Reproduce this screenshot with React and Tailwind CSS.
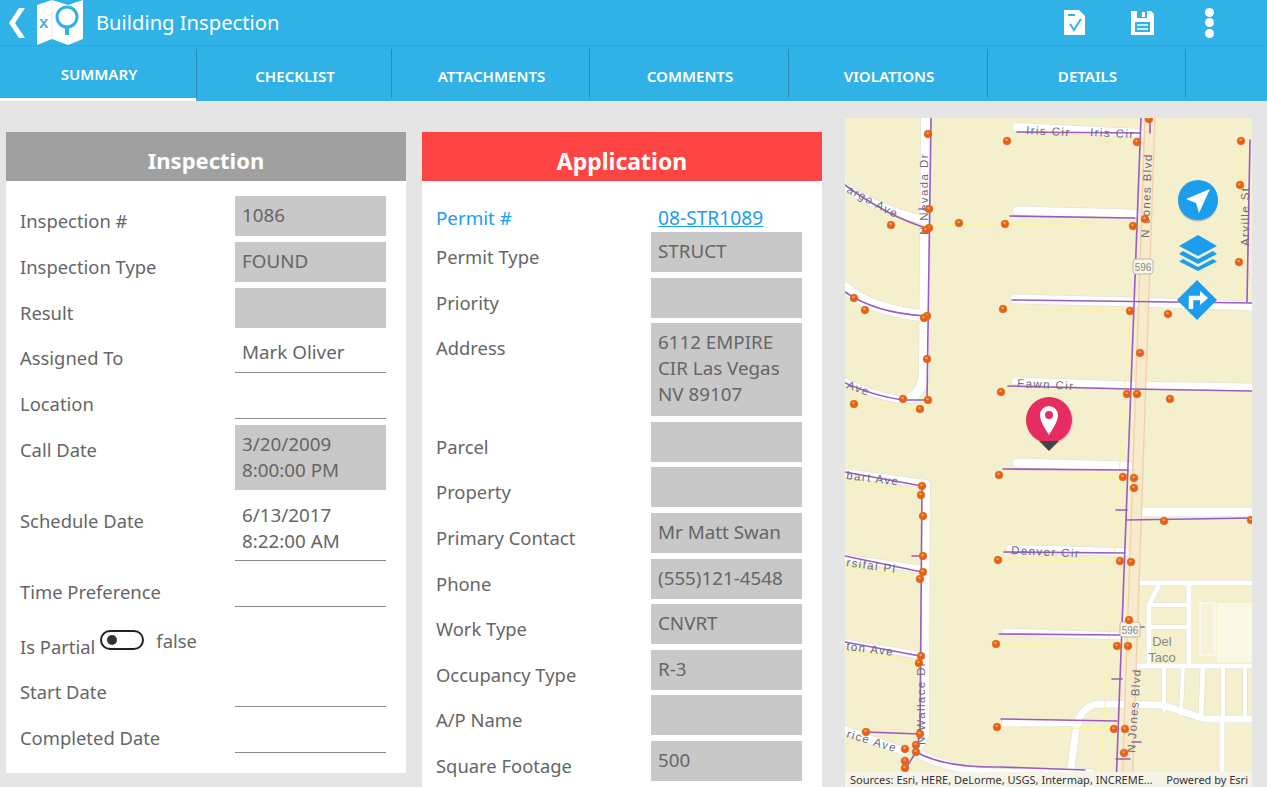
const inspection = [
  { label: "Inspection #", value: "1086", kind: "box" },
  { label: "Inspection Type", value: "FOUND", kind: "box" },
  { label: "Result", value: "", kind: "box" },
  { label: "Assigned To", value: "Mark Oliver", kind: "line" },
  { label: "Location", value: "", kind: "line" },
  { label: "Call Date", value: ["3/20/2009", "8:00:00 PM"], kind: "box" },
  { label: "Schedule Date", value: ["6/13/2017", "8:22:00 AM"], kind: "line" },
  { label: "Time Preference", value: "", kind: "line" },
  { kind: "toggle" },
  { label: "Start Date", value: "", kind: "line" },
  { label: "Completed Date", value: "", kind: "line" },
];
const application = [
  { label: "Permit Type", value: "STRUCT" },
  { label: "Priority", value: "" },
  { label: "Address", value: ["6112 EMPIRE", "CIR Las Vegas", "NV 89107"] },
  { label: "Parcel", value: "" },
  { label: "Property", value: "" },
  { label: "Primary Contact", value: "Mr Matt Swan" },
  { label: "Phone", value: "(555)121-4548" },
  { label: "Work Type", value: "CNVRT" },
  { label: "Occupancy Type", value: "R-3" },
  { label: "A/P Name", value: "" },
  { label: "Square Footage", value: "500" },
];
const tabs = [
  ["SUMMARY", "w-[197px]"],
  ["CHECKLIST", "w-[195px]"],
  ["ATTACHMENTS", "w-[198px]"],
  ["COMMENTS", "w-[199px]"],
  ["VIOLATIONS", "w-[199px]"],
  ["DETAILS", "w-[198px]"],
];

function Lines({ value }) {
  const lines = Array.isArray(value) ? value : [value];
  return lines.map((l, i) => (
    <div key={i} className="leading-[26px]">{l}</div>
  ));
}

function InspectionRow({ row }) {
  if (row.kind === "toggle") {
    return (
      <div className="flex h-[49px] items-start pl-[14px] text-[18.4px]">
        <span className="mt-[22px] leading-[26px]">Is Partial</span>
        <span className="relative ml-[5px] mt-[18px] h-[20px] w-[44px] rounded-full border-2 border-[#222]">
          <span className="absolute left-[5px] top-[3px] h-[10px] w-[10px] rounded-full bg-[#333]" />
        </span>
        <span className="ml-[12px] mt-[16px] leading-[26px]">false</span>
      </div>
    );
  }
  const multi = Array.isArray(row.value);
  return (
    <div className="flex items-start pl-[14px]">
      <div className="w-[215px] pt-[12px] text-[18.4px] leading-[26px]">{row.label}</div>
      <div
        className={`w-[151px] px-[7px] pt-[6px] text-[18.8px] ${multi ? "h-[65px]" : "h-[40px]"} ${
          row.kind === "box" ? "bg-[#c8c8c8]" : "border-b border-[#8a8a8a]"
        }`}
      >
        <Lines value={row.value} />
      </div>
    </div>
  );
}

function ApplicationRow({ row }) {
  const lines = Array.isArray(row.value) ? row.value.length : 1;
  return (
    <div className="flex items-start pl-[14px]">
      <div className="w-[215px] pt-[12px] text-[18.4px] leading-[26px]">{row.label}</div>
      <div
        className={`w-[151px] bg-[#c8c8c8] px-[7px] pt-[6px] text-[18.8px] ${lines === 3 ? "h-[93px]" : "h-[40px]"}`}
      >
        <Lines value={row.value} />
      </div>
    </div>
  );
}

function Logo() {
  return (
    <svg width="46" height="46" viewBox="0 0 46 46" className="ml-[12px] shrink-0">
      <path d="M0 5 L15 0 L31 5 L46 0 V39 L31 45 L15 39 L0 45 Z" fill="#fff" />
      <path d="M15 0 V39 M31 5 V45" stroke="#d6eef8" strokeWidth="1" />
      <text x="2" y="28" fontSize="17" fontWeight="700" fill="#5aa9cf" fontFamily="Liberation Sans, sans-serif">x</text>
      <circle cx="30" cy="17" r="10" fill="#fff" stroke="#31b2e7" strokeWidth="3" />
      <path d="M30 27 V35" stroke="#31b2e7" strokeWidth="4" />
    </svg>
  );
}

function HeaderIcons() {
  return (
    <div className="ml-auto flex items-center">
      <svg width="21" height="26" viewBox="0 0 21 26" className="mr-[46px]">
        <path d="M0 0 H15 L21 6 V25 H0 Z" fill="#fff" />
        <path d="M4 5 H11" stroke="#31b2e7" strokeWidth="2" />
        <path d="M6 14 L10 20 L17 9" fill="none" stroke="#31b2e7" strokeWidth="2" />
      </svg>
      <svg width="23" height="26" viewBox="0 0 23 26" className="mr-[51px]">
        <path d="M0 1 H20 L23 4 V25 H0 Z" fill="#fff" />
        <rect x="6" y="1" width="10" height="7" fill="#31b2e7" />
        <rect x="11" y="2" width="3" height="5" fill="#fff" />
        <rect x="4" y="12" width="15" height="10" fill="#31b2e7" />
        <path d="M6 15 H17 M6 19 H17" stroke="#fff" strokeWidth="1.6" />
      </svg>
      <div className="mr-[53px] flex flex-col gap-[1.5px]">
        <span className="h-[9px] w-[9px] rounded-full bg-white" />
        <span className="h-[9px] w-[9px] rounded-full bg-white" />
        <span className="h-[9px] w-[9px] rounded-full bg-white" />
      </div>
    </div>
  );
}

const whiteRoads = [
  ["M926 118 L924 372 Q923 392 910 398", 10],
  ["M1017 127 L1140 133", 8],
  ["M1017 211 L1135 214", 9],
  ["M1015 299 L1135 302 L1252 306", 9],
  ["M1015 381 L1130 385 L1252 387", 7],
  ["M1017 463 L1128 466", 9],
  ["M1136 512 L1252 512", 9],
  ["M1010 549 L1125 552", 8],
  ["M1006 632 L1122 636", 7],
  ["M845 187 Q880 210 924 220", 8],
  ["M845 288 Q870 310 925 316", 11],
  ["M845 382 Q880 398 905 400 Q920 400 925 372", 7],
  ["M845 473 L926 484 L925 735 L916 752 Q945 770 1000 773 L1090 773", 8],
  ["M845 558 L920 569", 7],
  ["M845 643 L918 655", 7],
  ["M845 730 L905 752", 8],
  ["M1005 723 L1078 723", 7],
  ["M1070 775 L1076 730 Q1080 705 1100 704 L1162 705 L1205 719 L1252 719", 7],
  ["M1136 583 L1252 583", 5],
  ["M1136 666 L1252 666", 5],
  ["M1158 587 L1149 605 L1149 666", 5],
  ["M1149 605 L1189 605", 4],
  ["M1149 627 L1189 627", 4],
  ["M1189 583 L1189 662", 5],
  ["M1164 666 L1164 710", 4],
  ["M1183 666 L1181 714", 4],
  ["M1203 666 L1201 716", 5],
  ["M1223 666 L1223 716", 4],
  ["M1245 666 L1245 716", 4],
  ["M1222 722 L1222 787", 5],
];
const purple = [
  "M931 118 L927 400",
  "M1017 132 L1140 133",
  "M1010 216 L1135 218",
  "M1012 300 L1252 303",
  "M1008 386 L1130 389 L1252 391",
  "M1003 469 L1128 470",
  "M1126 520 L1252 518",
  "M1004 552 L1125 553",
  "M999 634 L1120 635",
  "M1001 719 L1117 721",
  "M1141 118 L1116 787",
  "M1150 133 L1150 118",
  "M1250 140 L1247 302",
  "M845 185 Q885 215 926 228",
  "M845 292 Q875 313 925 316",
  "M845 383 Q880 398 905 400 L928 400",
  "M845 472 L922 486 L920 734 L916 752",
  "M845 556 L922 572",
  "M845 642 L920 656",
  "M866 732 L920 734",
  "M916 752 Q945 768 1000 767 L1085 770",
  "M916 752 L906 768",
  "M1116 510 L1127 510",
  "M1112 679 L1122 679",
  "M1130 627 L1144 627",
  "M1132 742 L1141 742",
  "M1116 759 L1130 759",
  "M912 556 L925 556",
  "M919 209 L932 209",
];
const yellow = [
  "M1007 141 L1137 142",
  "M891 225 L1005 224 L1133 226",
  "M1241 141 L1239 262 L1241 300",
  "M1003 309 L1130 311",
  "M854 404 L920 409",
  "M999 475 L1123 477",
  "M998 560 L1120 561",
  "M996 644 L1117 646",
  "M997 727 L1114 729",
  "M845 483 L920 493",
  "M845 566 L920 579",
  "M845 650 L919 663",
  "M1130 311 L1124 394 L1100 787",
];
const dots = [
  [928,134],[1007,141],[1137,142],[1149,119],[1241,141],[1240,185],[1239,262],[929,209],[929,228],[926,230],[891,225],[959,223],[1005,224],[1133,226],[1145,219],[854,298],[865,310],[927,316],[924,318],[1003,309],[1130,311],[1168,314],[927,359],[1140,353],[1001,392],[1127,394],[1137,394],[1170,399],[903,399],[928,400],[854,404],[920,409],
  [999,475],[1123,477],[1134,478],[1134,488],[922,486],[921,495],[923,516],[1164,521],[1251,520],[923,556],[923,572],[920,579],[998,560],[1120,561],[1131,562],[1129,620],[1117,646],[1128,646],[996,644],[921,656],[919,663],[997,727],[1114,729],[1125,729],[1124,753],[920,734],[866,732],[905,749],[916,745],[916,752],[905,761],[905,768],
];
const labels = [
  ["Iris Cir", 1026, 134, 3],
  ["Iris Cir", 1090, 136, 3],
  ["Fawn Cir", 1017, 387, 3],
  ["Denver Cir", 1011, 554, 3],
  ["argo Ave", 846, 192, 28],
  ["Ave", 846, 388, 20],
  ["bart Ave", 846, 479, 7],
  ["rsifal Pl", 846, 566, 8],
  ["ton Ave", 846, 650, 7],
  ["rice Ave", 846, 737, 17],
  ["N Wallace Dr", 925, 745, -90],
  ["N Nevada Dr", 928, 235, -90],
  ["N Jones Blvd", 1149, 238, -88],
  ["N Jones Blvd", 1135, 753, -86],
  ["Arville St", 1249, 246, -90],
];

function MapArt() {
  return (
    <svg viewBox="845 118 407 669" className="block h-[669px] w-[407px]">
      <rect x="845" y="118" width="407" height="669" fill="#f4efcd" />
      <rect x="1217" y="603" width="35" height="59" fill="#fbf8e6" />
      <rect x="1200" y="603" width="15" height="52" fill="#f8f3d8" stroke="#fff" strokeWidth="1" />
      <g fill="none" strokeLinecap="round" strokeLinejoin="round">
        {whiteRoads.map(([d, w], i) => (
          <path key={i} d={d} stroke="#dcdcd4" strokeWidth={w + 1} />
        ))}
        {whiteRoads.map(([d, w], i) => (
          <path key={i} d={d} stroke="#ffffff" strokeWidth={w} />
        ))}
        <path d="M1150 118 L1127 787" stroke="#f8ebcc" strokeWidth="10" />
        <path d="M1145 118 L1122 787 M1155 118 L1132 787" stroke="#f2cfb0" strokeWidth="1.4" />
        {yellow.map((d, i) => (
          <path key={i} d={d} stroke="#fbf39a" strokeWidth="1" />
        ))}
        {purple.map((d, i) => (
          <path key={i} d={d} stroke="#9a5cc0" strokeWidth="1.6" />
        ))}
      </g>
      <rect x="1133" y="259" width="20" height="15" rx="3" fill="#f8f6e6" stroke="#b8b8b8" />
      <text x="1143" y="271" textAnchor="middle" fontSize="10" fill="#888" fontFamily="Liberation Sans, sans-serif">596</text>
      <rect x="1120" y="622" width="20" height="15" rx="3" fill="#f8f6e6" stroke="#b8b8b8" />
      <text x="1130" y="634" textAnchor="middle" fontSize="10" fill="#888" fontFamily="Liberation Sans, sans-serif">596</text>
      <g fontFamily="Liberation Sans, sans-serif" fontSize="11.5" fill="#6f6a78" letterSpacing="1.4">
        {labels.map(([t, x, y, r], i) => (
          <text key={i} x={x} y={y} transform={`rotate(${r} ${x} ${y})`}>{t}</text>
        ))}
      </g>
      <text x="1162" y="646" textAnchor="middle" fontSize="13" fill="#8b8a80" fontFamily="Liberation Sans, sans-serif">Del</text>
      <text x="1162" y="662" textAnchor="middle" fontSize="13" fill="#8b8a80" fontFamily="Liberation Sans, sans-serif">Taco</text>
      {dots.map(([x, y], i) => (
        <g key={i}>
          <circle cx={x} cy={y} r="3.8" fill="#ee5c14" stroke="#c9722f" strokeWidth="0.8" />
          <circle cx={x - 0.5} cy={y - 1} r="1.3" fill="#f9a24e" />
        </g>
      ))}
    </svg>
  );
}

function Overlays() {
  return (
    <>
      <svg width="42" height="42" viewBox="0 0 42 42" className="absolute left-[332px] top-[62px]">
        <circle cx="21" cy="21.5" r="20" fill="#8a8a7a" opacity="0.5" />
        <circle cx="21" cy="20" r="20" fill="#1c9eec" />
        <path d="M33 9 L9 19 L19 23 L22 33 Z" fill="#fff" />
      </svg>
      <svg width="42" height="38" viewBox="0 0 42 38" className="absolute left-[332px] top-[116px]">
        <path d="M21 1 L40 12 L21 22 L2 12 Z" fill="#1c9eec" />
        <path d="M6 17 L2 20 L21 30 L40 20 L36 17 L21 25 Z" fill="#1c9eec" />
        <path d="M6 25 L2 27.5 L21 37 L40 27.5 L36 25 L21 33 Z" fill="#1c9eec" />
      </svg>
      <svg width="42" height="42" viewBox="0 0 42 42" className="absolute left-[331px] top-[161px]">
        <path d="M21 1 L41 21 L21 41 L1 21 Z" fill="#1c9eec" />
        <path d="M15 30 V19 H25" fill="none" stroke="#fff" strokeWidth="4.5" />
        <path d="M24 12 L32 19 L24 26 Z" fill="#fff" />
      </svg>
      <svg width="50" height="60" viewBox="0 0 50 60" className="absolute left-[180px] top-[277px]">
        <circle cx="25" cy="26" r="23.5" fill="#d8d0d0" />
        <circle cx="24" cy="25" r="23" fill="#e52d62" />
        <path d="M24 40 C19 32 15 26 15 20 A9 9 0 0 1 33 20 C33 26 29 32 24 40 Z" fill="#fff" />
        <circle cx="24" cy="20" r="4" fill="#e52d62" />
        <path d="M14 46 H34 L24 56 Z" fill="#444" />
      </svg>
      <div className="absolute bottom-0 left-0 flex h-[15px] w-full items-center justify-between whitespace-nowrap bg-[#f6f4e8] pl-[5px] pr-[4px] text-[11px] leading-[15px] text-[#333]">
        <span>Sources: Esri, HERE, DeLorme, USGS, Intermap, INCREME...</span>
        <span>Powered by Esri</span>
      </div>
    </>
  );
}

export default function App() {
  return (
    <div className="h-[787px] w-[1267px] overflow-hidden bg-[#e5e5e5] font-['Noto_Sans',sans-serif] text-[18.8px] text-[#666]">
      <header className="flex h-[46px] items-center bg-[#31b2e7] border-b border-[#2ea6d8]">
        <svg width="16" height="30" viewBox="0 0 16 30" className="ml-[9px] shrink-0">
          <path d="M16 0 L6 15 L16 30 H10 L0 15 L10 0 Z" fill="#fff" />
        </svg>
        <Logo />
        <span className="ml-[13px] text-[20.2px] text-white">Building Inspection</span>
        <HeaderIcons />
      </header>
      <nav className="flex h-[55px] bg-[#31b2e7]">
        {tabs.map(([t, w], i) => (
          <div
            key={t}
            className={`${w} my-[3px] flex items-center justify-center border-r border-[#2b8db6] pl-[2px] text-[15.1px] font-semibold text-white ${
              i === 0 ? "relative pt-[1px]" : "pt-[5px]"
            }`}
          >
            {t}
            {i === 0 && <span className="absolute bottom-[-3px] left-0 h-[3px] w-full bg-white" />}
          </div>
        ))}
      </nav>
      <main className="flex items-start pl-[6px]">
        <section className="mt-[31px] h-[641px] w-[400px] bg-white">
          <h2 className="flex h-[49px] items-center justify-center bg-[#a0a0a0] pt-[8px] text-[22px] font-bold text-white">Inspection</h2>
          <div className="flex flex-col gap-[5.8px] pt-[15px]">
            {inspection.map((r, i) => (
              <InspectionRow key={i} row={r} />
            ))}
          </div>
        </section>
        <section className="ml-[16px] mt-[31px] h-[700px] w-[400px] bg-white">
          <h2 className="flex h-[49px] items-center justify-center bg-[#ff4444] pt-[9px] text-[23px] font-bold text-white">Application</h2>
          <div className="flex pb-[1px] pl-[14px] pt-[24px] leading-[26px]">
            <span className="w-[222px] text-[#1c9eec]">Permit #</span>
            <span className="text-[19.2px] text-[#1c9eec] underline">08-STR1089</span>
          </div>
          <div className="flex flex-col gap-[5.6px]">
            {application.map((r, i) => (
              <ApplicationRow key={i} row={r} />
            ))}
          </div>
        </section>
        <aside className="relative ml-[23px] mt-[17px] h-[669px] w-[407px]">
          <MapArt />
          <Overlays />
        </aside>
      </main>
    </div>
  );
}
